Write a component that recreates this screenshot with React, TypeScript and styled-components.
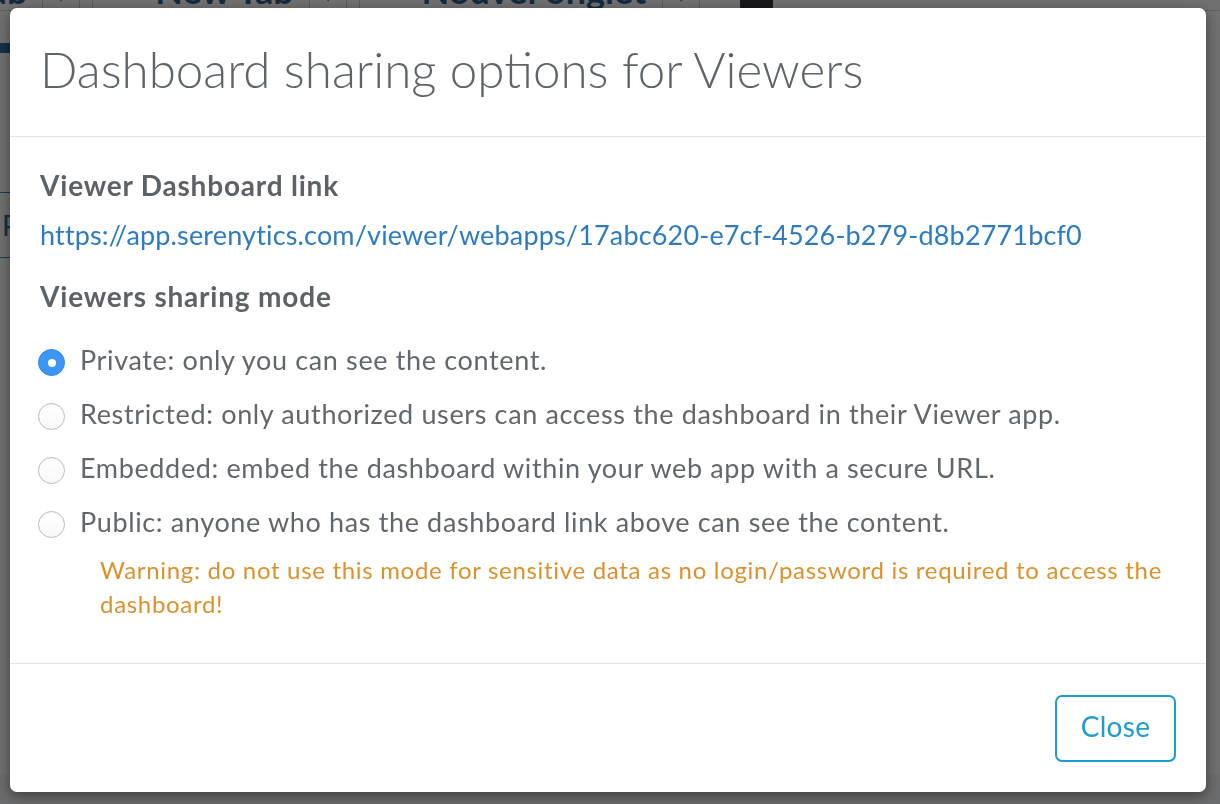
import styled, { createGlobalStyle } from 'styled-components';

const GlobalStyle = createGlobalStyle`
  html, body {
    margin: 0;
    padding: 0;
  }
  body {
    font-family: Lato, "Noto Sans", sans-serif;
    background: #f4f5f7;
    overflow: hidden;
  }
`;

type Mode = {
	id: string;
	label: string;
	checked?: boolean;
	warning?: string;
};

const modes: Mode[] = [
	{ id: 'private', label: 'Private: only you can see the content.', checked: true },
	{ id: 'restricted', label: 'Restricted: only authorized users can access the dashboard in their Viewer app.' },
	{ id: 'embedded', label: 'Embedded: embed the dashboard within your web app with a secure URL.' },
	{
		id: 'public',
		label: 'Public: anyone who has the dashboard link above can see the content.',
		warning: 'Warning: do not use this mode for sensitive data as no login/password is required to access the dashboard!',
	},
];

function App() {
	return (
		<>
			<GlobalStyle />
			<AppPage>
				<Toolbar>
					<Tab><TabLabel>Tab</TabLabel><CaretBox>▾</CaretBox></Tab>
					<Tab><TabLabel>New Tab</TabLabel><CaretBox>▾</CaretBox></Tab>
					<Tab><TabLabel>Nouvel onglet</TabLabel><CaretBox>▾</CaretBox></Tab>
					<ToolIcon />
				</Toolbar>
				<Workspace>
					<SideHeader />
					<FilterBox>P</FilterBox>
				</Workspace>
			</AppPage>

			<Backdrop />

			<Modal>
				<Header>
					<Title>Dashboard sharing options for Viewers</Title>
				</Header>
				<Body>
					<SectionLabel>Viewer Dashboard link</SectionLabel>
					<Link href="#">https://app.serenytics.com/viewer/webapps/17abc620-e7cf-4526-b279-d8b2771bcf0</Link>
					<SectionLabel $spaced>Viewers sharing mode</SectionLabel>
					<RadioList>
						{modes.map(m => (
							<li key={m.id}>
								<RadioRow>
									<Radio $checked={!!m.checked} />
									<span>{m.label}</span>
								</RadioRow>
								{m.warning && <Warning>{m.warning}</Warning>}
							</li>
						))}
					</RadioList>
				</Body>
				<Footer>
					<CloseButton>Close</CloseButton>
				</Footer>
			</Modal>
		</>
	);
}

export default App;

const AppPage = styled.div`
    height: 100vh;
    background: #ffffff;
`

const Toolbar = styled.div`
    display: flex;
    align-items: stretch;
    height: 40px;
    margin-top: -30px;
    margin-left: -104px;
    border-bottom: 1px solid #d6dbe0;
`

const Tab = styled.div`
    display: flex;
    align-items: stretch;
    border-left: 1px solid #c9ced3;
    margin-left: 12px;
`

const TabLabel = styled.div`
    display: flex;
    align-items: flex-end;
    padding: 0 15px 2px 62px;
    font-size: 36px;
    font-weight: 700;
    line-height: 1;
    color: #2f5f8f;
`

const CaretBox = styled.div`
    display: flex;
    align-items: flex-end;
    justify-content: center;
    width: 36px;
    padding-bottom: 4px;
    border-left: 1px solid #c9ced3;
    border-right: 1px solid #c9ced3;
    font-size: 16px;
    color: #2f5f8f;
`

const ToolIcon = styled.div`
    width: 33px;
    height: 34px;
    margin: 0 0 0 40px;
    align-self: flex-end;
    border-radius: 4px;
    background: #333a40;
`

const Workspace = styled.div`
    display: flex;
    flex-direction: column;
    width: 240px;
    padding-top: 32px;
`

const SideHeader = styled.div`
    height: 10px;
    background: #2c6ea6;
`

const FilterBox = styled.div`
    margin-top: 139px;
    height: 64px;
    display: flex;
    align-items: center;
    padding-left: 2px;
    border-top: 1px solid #2d86b8;
    border-bottom: 1px solid #2d86b8;
    font-size: 28px;
    color: #2d6b93;
`

const Backdrop = styled.div`
    position: fixed;
    inset: 0;
    background: rgba(0, 0, 0, 0.56);
`

const Modal = styled.div`
    position: fixed;
    left: 10px;
    top: 8px;
    width: 1196px;
    height: 784px;
    display: flex;
    flex-direction: column;
    background: #ffffff;
    border-radius: 7px;
    box-shadow: 0 4px 14px rgba(0, 0, 0, 0.45);
    color: #5f6469;
`

const Header = styled.div`
    padding: 31px 30px 36px;
    border-bottom: 1px solid #e5e5e5;
`

const Title = styled.h1`
    margin: 0;
    font-size: 49.3px;
    font-weight: 300;
    line-height: 61px;
    color: #5f6469;
`

const Body = styled.div`
    flex: 1;
    padding: 28px 30px 0;
    font-size: 27px;
`

const SectionLabel = styled.div<{ $spaced?: boolean }>`
    font-size: 28px;
    font-weight: 700;
    line-height: 40px;
    letter-spacing: 0.8px;
    color: #5d6267;
    margin-top: ${props => props.$spaced ? '21px' : '0'};
`

const Link = styled.a`
    display: block;
    margin-top: 10px;
    line-height: 40px;
    letter-spacing: 0.16px;
    color: #2f7bbf;
    text-decoration: none;
`

const RadioList = styled.ul`
    list-style: none;
    margin: 17px 0 0;
    padding: 0;
`

const RadioRow = styled.div`
    display: flex;
    align-items: center;
    gap: 15px;
    height: 54px;
    line-height: 54px;
    letter-spacing: 0.64px;
    color: #62676c;
`

const Radio = styled.span<{ $checked: boolean }>`
    position: relative;
    flex: none;
    box-sizing: border-box;
    width: 27px;
    height: 27px;
    margin: 5px 0 0 -2px;
    border-radius: 50%;
    border: 1px solid ${props => props.$checked ? '#2f86ea' : '#bcbcbc'};
    background: ${props => props.$checked ? '#3c96f6' : 'linear-gradient(#ffffff, #f8f8f8)'};
    box-shadow: ${props => props.$checked ? 'none' : 'inset 0 1px 1px rgba(0, 0, 0, 0.04)'};

    &::after {
        content: '';
        display: ${props => props.$checked ? 'block' : 'none'};
        position: absolute;
        left: 50%;
        top: 50%;
        width: 8px;
        height: 8px;
        margin: -4px 0 0 -4px;
        border-radius: 50%;
        background: #ffffff;
    }
`

const Warning = styled.div`
    margin: 4px 0 0 60px;
    font-size: 24px;
    line-height: 34px;
    letter-spacing: 0.69px;
    color: #d8922f;
`

const Footer = styled.div`
    display: flex;
    justify-content: flex-end;
    align-items: flex-start;
    height: 129px;
    box-sizing: border-box;
    padding: 31px 30px 0;
    border-top: 1px solid #e5e5e5;
`

const CloseButton = styled.button`
    width: 121px;
    height: 67px;
    padding: 0 0 6px;
    border: 2px solid #1f9bcf;
    border-radius: 7px;
    background: #ffffff;
    color: #1f9bcf;
    font-family: Lato, "Noto Sans", sans-serif;
    font-size: 28px;
    letter-spacing: 0.3px;
    cursor: pointer;
`
